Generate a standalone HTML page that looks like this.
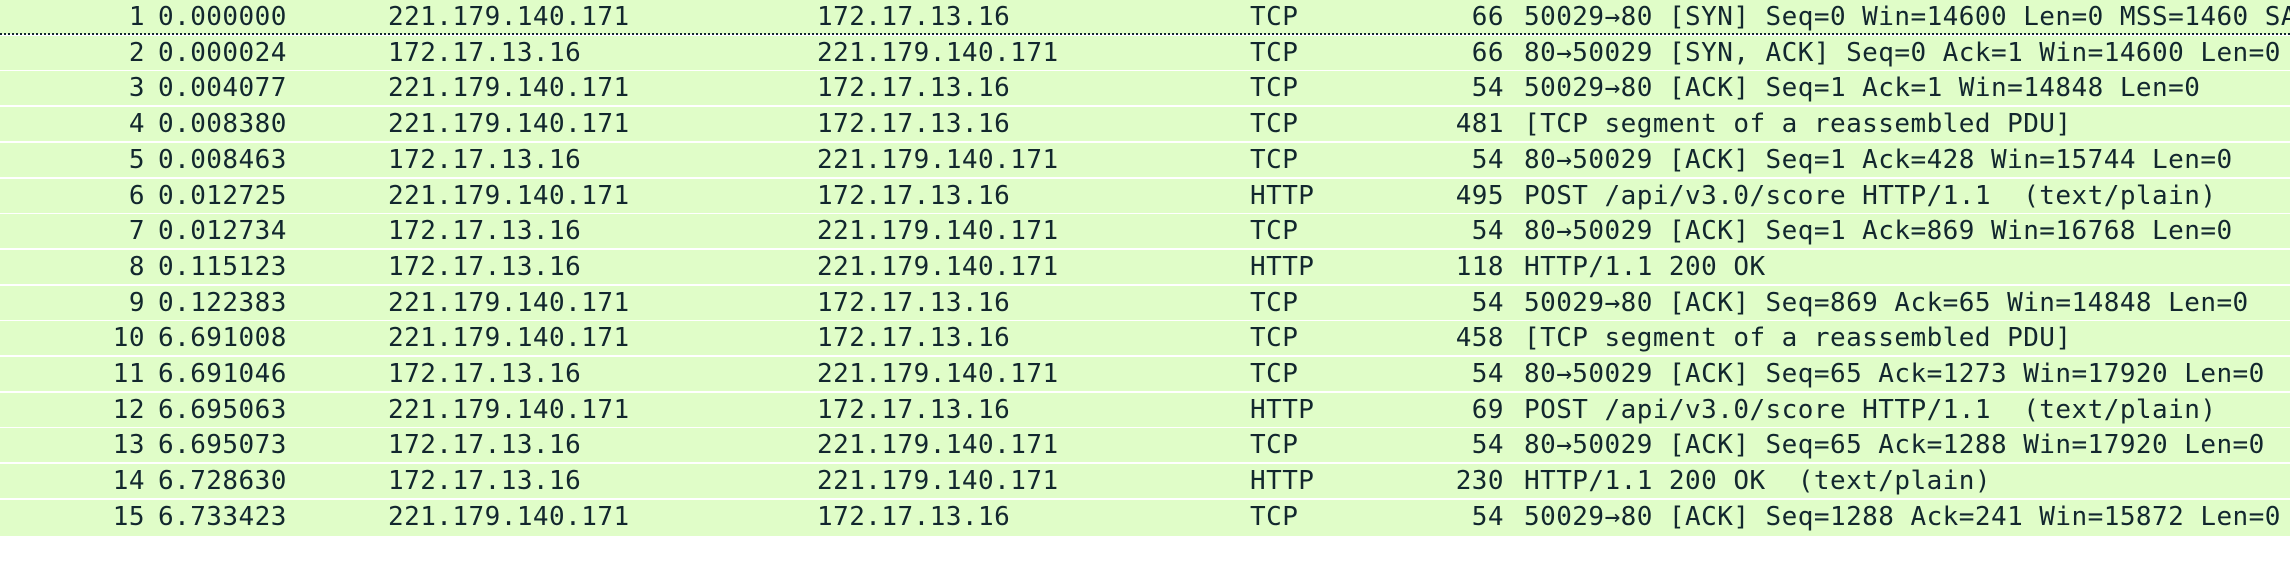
<!DOCTYPE html>
<html><head><meta charset="utf-8"><style>
html,body{margin:0;padding:0;background:#fff;width:2290px;height:568px;overflow:hidden}
.r{position:absolute;left:0;width:2290px;height:34px;overflow:hidden;background:#e0fdc8;font-family:"DejaVu Sans Mono","Liberation Mono",monospace;font-size:26px;letter-spacing:0.45px;color:#12272e;white-space:pre;line-height:34px}
.r span{position:absolute;top:0}
.n{right:2145px;text-align:right}
.t{left:158px}.s{left:388px}.d{left:817px}.p{left:1250px}
.l{right:786px;text-align:right}.i{left:1524px}
.dot{position:absolute;left:0;top:33px;width:2290px;border-top:2px dotted #12272e}
</style></head><body>
<div class="r" style="top:0"><span class="n">1</span><span class="t">0.000000</span><span class="s">221.179.140.171</span><span class="d">172.17.13.16</span><span class="p">TCP</span><span class="l">66</span><span class="i">50029→80 [SYN] Seq=0 Win=14600 Len=0 MSS=1460 SACK_PERM=1</span></div>
<div class="dot"></div>
<div class="r" style="top:35.7px"><span class="n">2</span><span class="t">0.000024</span><span class="s">172.17.13.16</span><span class="d">221.179.140.171</span><span class="p">TCP</span><span class="l">66</span><span class="i">80→50029 [SYN, ACK] Seq=0 Ack=1 Win=14600 Len=0</span></div>
<div class="r" style="top:71.4px"><span class="n">3</span><span class="t">0.004077</span><span class="s">221.179.140.171</span><span class="d">172.17.13.16</span><span class="p">TCP</span><span class="l">54</span><span class="i">50029→80 [ACK] Seq=1 Ack=1 Win=14848 Len=0</span></div>
<div class="r" style="top:107.1px"><span class="n">4</span><span class="t">0.008380</span><span class="s">221.179.140.171</span><span class="d">172.17.13.16</span><span class="p">TCP</span><span class="l">481</span><span class="i">[TCP segment of a reassembled PDU]</span></div>
<div class="r" style="top:142.8px"><span class="n">5</span><span class="t">0.008463</span><span class="s">172.17.13.16</span><span class="d">221.179.140.171</span><span class="p">TCP</span><span class="l">54</span><span class="i">80→50029 [ACK] Seq=1 Ack=428 Win=15744 Len=0</span></div>
<div class="r" style="top:178.5px"><span class="n">6</span><span class="t">0.012725</span><span class="s">221.179.140.171</span><span class="d">172.17.13.16</span><span class="p">HTTP</span><span class="l">495</span><span class="i">POST /api/v3.0/score HTTP/1.1  (text/plain)</span></div>
<div class="r" style="top:214.2px"><span class="n">7</span><span class="t">0.012734</span><span class="s">172.17.13.16</span><span class="d">221.179.140.171</span><span class="p">TCP</span><span class="l">54</span><span class="i">80→50029 [ACK] Seq=1 Ack=869 Win=16768 Len=0</span></div>
<div class="r" style="top:249.9px"><span class="n">8</span><span class="t">0.115123</span><span class="s">172.17.13.16</span><span class="d">221.179.140.171</span><span class="p">HTTP</span><span class="l">118</span><span class="i">HTTP/1.1 200 OK</span></div>
<div class="r" style="top:285.6px"><span class="n">9</span><span class="t">0.122383</span><span class="s">221.179.140.171</span><span class="d">172.17.13.16</span><span class="p">TCP</span><span class="l">54</span><span class="i">50029→80 [ACK] Seq=869 Ack=65 Win=14848 Len=0</span></div>
<div class="r" style="top:321.3px"><span class="n">10</span><span class="t">6.691008</span><span class="s">221.179.140.171</span><span class="d">172.17.13.16</span><span class="p">TCP</span><span class="l">458</span><span class="i">[TCP segment of a reassembled PDU]</span></div>
<div class="r" style="top:357px"><span class="n">11</span><span class="t">6.691046</span><span class="s">172.17.13.16</span><span class="d">221.179.140.171</span><span class="p">TCP</span><span class="l">54</span><span class="i">80→50029 [ACK] Seq=65 Ack=1273 Win=17920 Len=0</span></div>
<div class="r" style="top:392.7px"><span class="n">12</span><span class="t">6.695063</span><span class="s">221.179.140.171</span><span class="d">172.17.13.16</span><span class="p">HTTP</span><span class="l">69</span><span class="i">POST /api/v3.0/score HTTP/1.1  (text/plain)</span></div>
<div class="r" style="top:428.4px"><span class="n">13</span><span class="t">6.695073</span><span class="s">172.17.13.16</span><span class="d">221.179.140.171</span><span class="p">TCP</span><span class="l">54</span><span class="i">80→50029 [ACK] Seq=65 Ack=1288 Win=17920 Len=0</span></div>
<div class="r" style="top:464.1px"><span class="n">14</span><span class="t">6.728630</span><span class="s">172.17.13.16</span><span class="d">221.179.140.171</span><span class="p">HTTP</span><span class="l">230</span><span class="i">HTTP/1.1 200 OK  (text/plain)</span></div>
<div class="r" style="top:499.8px;height:36px"><span class="n">15</span><span class="t">6.733423</span><span class="s">221.179.140.171</span><span class="d">172.17.13.16</span><span class="p">TCP</span><span class="l">54</span><span class="i">50029→80 [ACK] Seq=1288 Ack=241 Win=15872 Len=0</span></div>
</body></html>
